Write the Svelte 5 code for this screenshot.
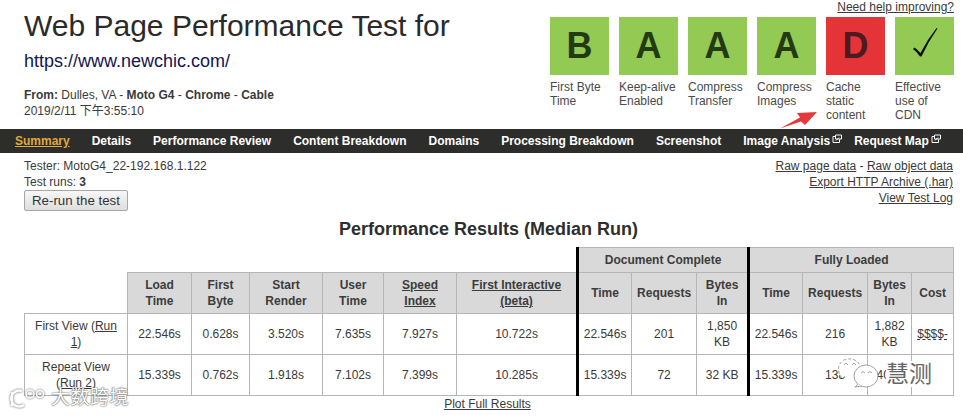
<script lang="ts">
  const grades = [
    { grade: 'B', label: 'First Byte Time', cls: 'good' },
    { grade: 'A', label: 'Keep-alive Enabled', cls: 'good' },
    { grade: 'A', label: 'Compress Transfer', cls: 'good' },
    { grade: 'A', label: 'Compress Images', cls: 'good' },
    { grade: 'D', label: 'Cache static content', cls: 'bad' },
    { grade: '', label: 'Effective use of CDN', cls: 'good' }
  ];

  const nav = [
    { text: 'Summary', active: true },
    { text: 'Details' },
    { text: 'Performance Review' },
    { text: 'Content Breakdown' },
    { text: 'Domains' },
    { text: 'Processing Breakdown' },
    { text: 'Screenshot' },
    { text: 'Image Analysis', ext: true },
    { text: 'Request Map', ext: true }
  ];

  const rows = [
    {
      name: 'First View (', run: 'Run 1',
      cells: ['22.546s', '0.628s', '3.520s', '7.635s', '7.927s', '10.722s'],
      doc: ['22.546s', '201', '1,850 KB'],
      full: ['22.546s', '216', '1,882 KB'],
      cost: '$$$$-'
    },
    {
      name: 'Repeat View (', run: 'Run 2',
      cells: ['15.339s', '0.762s', '1.918s', '7.102s', '7.399s', '10.285s'],
      doc: ['15.339s', '72', '32 KB'],
      full: ['15.339s', '138', '340 KB'],
      cost: ''
    }
  ];

  const widths = [103, 64, 58, 73, 61, 73, 121, 54, 65, 52, 54, 65, 44, 42];
</script>

{#snippet extIcon()}
  <svg class="ext" width="10" height="10" viewBox="0 0 10 10" fill="none" stroke="#fff" stroke-width="1">
    <path d="M7.500 5.500v3h-6.500v-6h3" />
    <path d="M3.500 1h6v4h-6z" />
    <path d="M4 6.500l3-3" />
  </svg>
{/snippet}

<div class="page">
  <header class="top">
    <div class="intro">
      <h1>Web Page Performance Test for</h1>
      <a class="url" href="#top">https://www.newchic.com/</a>
      <p class="from"><b>From:</b> Dulles, VA - <b>Moto G4</b> - <b>Chrome</b> - <b>Cable</b><br />2019/2/11 下午3:55:10</p>
    </div>
    <div class="scores">
      <a class="help" href="#top">Need help improving?</a>
      <ul class="grades">
        {#each grades as g}
          <li>
            <div class="box {g.cls}">
              {#if g.grade}
                {g.grade}
              {:else}
                <svg class="tick" width="59" height="58" viewBox="0 0 59 58">
                  <path d="M18 32L19.500 30.500Q23 33 25.500 36Q32 23 41.500 11L42.500 11.500Q33 25 26.500 39.500L25 39.500Q22 35 18 32z" fill="#111" />
                </svg>
              {/if}
            </div>
            <span>{g.label}</span>
          </li>
        {/each}
      </ul>
    </div>
  </header>

  <nav>
    {#each nav as item}
      <a href="#top" class:active={item.active} class:external={item.ext}>{item.text}{#if item.ext}{@render extIcon()}{/if}</a>
    {/each}
  </nav>

  <section class="meta">
    <div>
      <div>Tester: MotoG4_22-192.168.1.122</div>
      <div>Test runs: <b>3</b></div>
      <button>Re-run the test</button>
    </div>
    <div class="links">
      <div><a href="#top">Raw page data</a> - <a href="#top">Raw object data</a></div>
      <div><a href="#top">Export HTTP Archive (.har)</a></div>
      <div><a href="#top">View Test Log</a></div>
    </div>
  </section>

  <h2>Performance Results (Median Run)</h2>

  <table>
    <colgroup>
      {#each widths as w}<col style="width: {w}px" />{/each}
    </colgroup>
    <thead>
      <tr class="groups">
        <th class="blank" colspan="7"></th>
        <th class="heavy" colspan="3">Document Complete</th>
        <th class="heavy" colspan="4">Fully Loaded</th>
      </tr>
      <tr class="names">
        <th class="blank"></th>
        <th>Load Time</th>
        <th>First Byte</th>
        <th>Start Render</th>
        <th>User Time</th>
        <th><a href="#top">Speed Index</a></th>
        <th><a href="#top">First Interactive (beta)</a></th>
        <th class="heavy">Time</th>
        <th>Requests</th>
        <th>Bytes In</th>
        <th class="heavy">Time</th>
        <th>Requests</th>
        <th>Bytes In</th>
        <th>Cost</th>
      </tr>
    </thead>
    <tbody>
      {#each rows as r}
        <tr>
          <td class="view">{r.name}<a href="#top">{r.run}</a>)</td>
          {#each r.cells as c}<td>{c}</td>{/each}
          {#each r.doc as c, i}<td class:heavy={i === 0} class:single={c.length < 8}>{c}</td>{/each}
          {#each r.full as c, i}<td class:heavy={i === 0} class:single={c.length < 8}>{c}</td>{/each}
          <td><a class="cost" href="#top">{r.cost}</a></td>
        </tr>
      {/each}
    </tbody>
  </table>

  <div class="plot"><a href="#top">Plot Full Results</a></div>

  <svg class="arrow" width="40" height="20" viewBox="0 0 40 20">
    <path d="M1 18.500L21 7.500L18 3L38 2L26 15L22 11.500z" fill="#e5383a" />
  </svg>

  <div class="mark-left">
    <svg width="36" height="22" viewBox="0 0 36 22" fill="none" stroke="#fff" stroke-width="2.500">
      <path d="M3 5v14M13 4a8 8 0 1 0 2 14" />
      <circle cx="21" cy="7" r="4" stroke-width="1.500" />
      <circle cx="31" cy="7" r="3.500" stroke-width="1.500" />
    </svg>
    <span>大数跨境</span>
  </div>

  <div class="mark-right">
    <svg width="46" height="36" viewBox="0 0 46 36" fill="#fff" stroke="#8a8a8a" stroke-width="0.800">
      <path d="M6 22C1 16 1 8 8 4c7-3 15 0 16 7" stroke-dasharray="3 2" />
      <ellipse cx="30" cy="20" rx="12" ry="11" />
      <path d="M22 28l-3 3 7-1" />
      <path d="M25 17l2-1.500 2 1.500M32 17l2-1.500 2 1.500" fill="none" />
      <path d="M8 9l2-2 2 2M16 9l2-2 2 2" fill="none" />
    </svg>
    <span>慧测</span>
  </div>
</div>

<style>
  :global(body) {
    margin: 0;
    background: #fff;
  }

  .page {
    position: relative;
    width: 963px;
    height: 416px;
    overflow: hidden;
    font-family: 'Liberation Sans', Arial, 'Noto Sans CJK SC', sans-serif;
    font-size: 12px;
    line-height: 16px;
    color: #3a3a3a;
  }

  a {
    color: inherit;
  }

  .top {
    display: flex;
    justify-content: space-between;
    height: 129px;
    padding: 0 9px 0 24px;
  }

  h1 {
    margin: 8px 0 0;
    font-size: 30px;
    font-weight: 400;
    line-height: 36px;
    color: #2a2a2a;
  }

  .url {
    display: block;
    margin-top: 7px;
    font-size: 18px;
    line-height: 20px;
    color: #14144e;
    text-decoration: none;
  }

  .from {
    margin: 16px 0 0;
    line-height: 16px;
  }

  .scores {
    width: 404px;
  }

  .help {
    display: block;
    height: 17px;
    line-height: 14px;
    text-align: right;
  }

  .grades {
    display: flex;
    gap: 10px;
    margin: 0;
    padding: 0;
    list-style: none;
  }

  .grades li {
    width: 59px;
    line-height: 14px;
    color: #4a4a4a;
  }

  .box {
    height: 58px;
    margin-bottom: 5px;
    font-size: 36px;
    font-weight: 700;
    line-height: 58px;
    text-align: center;
    color: #243a12;
  }

  .tick {
    display: block;
  }

  .good {
    background: #92ca54;
  }

  .bad {
    background: #e43438;
    color: #4e1a20;
  }

  nav {
    display: flex;
    align-items: center;
    gap: 22px;
    height: 24px;
    padding-left: 15px;
    background: #2d2d2b;
    font-weight: 700;
  }

  nav a {
    color: #fff;
    text-decoration: none;
    white-space: nowrap;
  }

  nav a.active {
    color: #e0a93a;
    text-decoration: underline;
  }

  nav a.external {
    margin-right: -10px;
  }

  .ext {
    margin-left: 2px;
    vertical-align: 1px;
  }

  .meta {
    display: flex;
    justify-content: space-between;
    padding: 5px 10px 0 24px;
    height: 61px;
  }

  .links {
    text-align: right;
  }

  button {
    display: block;
    width: 104px;
    height: 21px;
    padding: 0;
    border: 1px solid #a6a6a6;
    border-radius: 2px;
    background: linear-gradient(#f7f7f7, #dedede);
    font: 13.300px 'Liberation Sans', Arial, sans-serif;
    color: #333;
  }

  h2 {
    margin: 0;
    height: 28px;
    padding-left: 14px;
    font-size: 18px;
    line-height: 20px;
    text-align: center;
    color: #2e2e2e;
  }

  table {
    width: 929px;
    margin-left: 24px;
    border-collapse: collapse;
    table-layout: fixed;
    text-align: center;
  }

  th, td {
    padding: 0 3px;
    border: 1px solid #b5b5b5;
    line-height: 16px;
  }

  th {
    background: #d9d9d9;
    color: #3c3c3c;
  }

  .groups th {
    height: 24px;
  }

  .names th {
    height: 40px;
  }

  tbody td {
    height: 40px;
  }

  td.view {
    padding: 0 6px;
  }

  td.single {
    padding: 0;
    white-space: nowrap;
  }

  th.blank {
    background: none;
    border: none;
  }

  .groups th.blank {
    border-right: 2px solid #000;
  }

  .names th.blank {
    border-bottom: 1px solid #b5b5b5;
    border-right: 1px solid #b5b5b5;
  }

  .heavy {
    border-left: 3px solid #000;
  }

  .cost {
    text-decoration-style: dashed;
  }

  .plot {
    padding-left: 12px;
    text-align: center;
    line-height: 16px;
  }

  .arrow {
    position: absolute;
    left: 779px;
    top: 110px;
  }

  .mark-left {
    position: absolute;
    left: 9px;
    top: 387px;
    display: flex;
    align-items: center;
    gap: 6px;
    font-size: 19px;
    letter-spacing: 0.500px;
    color: #fff;
    text-shadow: 0 0 2px #555, 0 0 1px #555;
  }

  .mark-left svg {
    filter: drop-shadow(0 0 1px #555);
  }

  .mark-right {
    position: absolute;
    left: 836px;
    top: 356px;
    display: flex;
    align-items: center;
    font-size: 23px;
    color: #666;
  }

  .mark-right span {
    margin-left: 4px;
    background: #fff;
    line-height: 26px;
  }
</style>
